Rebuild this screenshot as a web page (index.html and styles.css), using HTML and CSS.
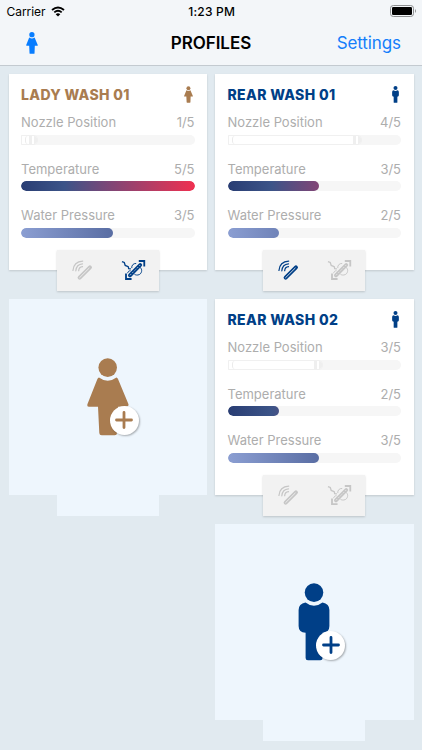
FILE: index.html
```html
<!DOCTYPE html>
<html lang="en">
<head>
<meta charset="UTF-8">
<meta name="viewport" content="width=device-width, initial-scale=1.0">
<title>Profiles</title>
<link rel="stylesheet" href="styles.css">
</head>
<body>
  <!-- ---------- SHARED ICONS ---------- -->
  <svg class="sprite" aria-hidden="true">
    <symbol id="lady" viewBox="0 0 42 78">
      <circle cx="20.7" cy="9.6" r="9.3"/>
      <path d="M12 19.4Q20.7 26 29.4 19.4Q30.4 19.8 31 21L41.4 46Q42 48.8 39.5 48.8H31L30 75Q30 77.3 27.7 77.3H14.7Q12.4 77.3 12.3 75L11 48.8H2.2Q-.4 48.6.5 46L10.4 21Q11 19.8 12 19.4Z"/>
    </symbol>
    <symbol id="man" viewBox="0 0 32 78">
      <circle cx="16" cy="9.6" r="9.3"/>
      <path d="M7.5 19.4Q16 26 24.5 19.4Q31.4 20.5 31.4 27V43Q31.4 49.5 24.6 49.8V75Q24.6 77.3 22.3 77.3H9.9Q7.6 77.3 7.6 75V49.8Q.6 49.5.6 43V27Q.6 20.5 7.5 19.4Z"/>
    </symbol>
    <symbol id="wand" viewBox="0 0 22 22">
      <g fill="none" stroke="currentColor" stroke-linecap="round">
        <path d="M8 18.5L18.8 7.7" stroke-width="4.2"/>
        <path d="M8 18.5L18 8.5" class="groove" stroke-width=".9"/>
        <path d="M1 11C1.5 5 5.5 1.5 11.2 1.2M4 11.3C4.4 7.2 7.2 4.4 11 4.1M7 11.2C7.2 8.8 8.8 7.2 11 7" stroke-width="1.3"/>
      </g>
    </symbol>
    <symbol id="spray" viewBox="0 0 26 22">
      <g fill="none" stroke="currentColor">
        <path d="M18.5 1.6H24.2V7.3M5.2 14.7V20.4H11" stroke-width="1.9"/>
        <path d="M9.3 16.5L20 5.8" stroke-width="4" stroke-linecap="round"/>
        <path d="M9.3 16.5L20 5.8" class="groove" stroke-width=".7" stroke-dasharray="2 1.4"/>
        <path d="M1 2.2L3.4 3.2L4.4 6.2L7.5 7.5L8 9.6L10.3 9.8" stroke-width="1.4"/>
        <path d="M11.2 9C10.8 6.3 12.8 4 15.8 4.2M19.9 8.3C22.6 10 21.9 15.6 17.6 16.2C15.6 16.4 14.2 15.9 13.8 15M6.9 14.3C7.2 12.6 8.4 11.6 10 11.8" stroke-width="1"/>
      </g>
    </symbol>
  </svg>

  <header class="top">
    <div class="status">
      <div class="carrier">
        <span>Carrier</span>
        <svg class="wifi" viewBox="0 0 14 11">
          <path d="M1 4Q7-1 13 4M3.3 6.4Q7 3.2 10.7 6.4" fill="none" stroke="#000" stroke-width="1.9"/>
          <path d="M7 10.6L4.7 8.2Q7 6.4 9.3 8.2Z"/>
        </svg>
      </div>
      <span class="time">1:23 PM</span>
      <div class="battery-wrap">
        <svg class="battery" viewBox="0 0 27 12">
          <rect x=".5" y=".5" width="23" height="11" rx="2.8" fill="none" stroke="#8e9092"/>
          <rect x="2" y="2" width="20" height="8" rx="1.3"/>
          <path d="M25 4Q27 6 25 8Z" fill="#8e9092"/>
        </svg>
      </div>
    </div>
    <nav class="nav">
      <div class="nav-left"><svg class="nav-icon"><use href="#lady"/></svg></div>
      <h1>PROFILES</h1>
      <a class="settings">Settings</a>
    </nav>
  </header>

  <main class="columns">
    <section class="column">
      <article class="profile lady">
        <div class="card">
          <div class="card-head"><h2>LADY WASH 01</h2><svg class="who"><use href="#lady"/></svg></div>
          <div class="stat">
            <div class="stat-label"><span>Nozzle Position</span><span>1/5</span></div>
            <div class="bar track"><div class="nozzle" style="width:10%"><i></i></div></div>
          </div>
          <div class="stat">
            <div class="stat-label"><span>Temperature</span><span>5/5</span></div>
            <div class="bar"><div class="fill temp" style="width:100%"></div></div>
          </div>
          <div class="stat">
            <div class="stat-label"><span>Water Pressure</span><span>3/5</span></div>
            <div class="bar"><div class="fill water" style="width:53%"></div></div>
          </div>
        </div>
        <div class="modes">
          <svg class="wand"><use href="#wand"/></svg>
          <svg class="spray on"><use href="#spray"/></svg>
        </div>
      </article>

      <article class="profile empty lady">
        <div class="card">
          <div class="figure">
            <svg class="person"><use href="#lady"/></svg>
            <span class="plus"><svg viewBox="0 0 18 18"><path d="M9 1.5V16.5M1.5 9H16.5"/></svg></span>
          </div>
        </div>
        <div class="modes"></div>
      </article>
    </section>

    <section class="column">
      <article class="profile rear">
        <div class="card">
          <div class="card-head"><h2>REAR WASH 01</h2><svg class="who"><use href="#man"/></svg></div>
          <div class="stat">
            <div class="stat-label"><span>Nozzle Position</span><span>4/5</span></div>
            <div class="bar track"><div class="nozzle" style="width:77.5%"><i></i></div></div>
          </div>
          <div class="stat">
            <div class="stat-label"><span>Temperature</span><span>3/5</span></div>
            <div class="bar"><div class="fill temp" style="width:53%"></div></div>
          </div>
          <div class="stat">
            <div class="stat-label"><span>Water Pressure</span><span>2/5</span></div>
            <div class="bar"><div class="fill water" style="width:29.5%"></div></div>
          </div>
        </div>
        <div class="modes">
          <svg class="wand on"><use href="#wand"/></svg>
          <svg class="spray"><use href="#spray"/></svg>
        </div>
      </article>

      <article class="profile rear">
        <div class="card">
          <div class="card-head"><h2>REAR WASH 02</h2><svg class="who"><use href="#man"/></svg></div>
          <div class="stat">
            <div class="stat-label"><span>Nozzle Position</span><span>3/5</span></div>
            <div class="bar track"><div class="nozzle" style="width:55%"><i></i></div></div>
          </div>
          <div class="stat">
            <div class="stat-label"><span>Temperature</span><span>2/5</span></div>
            <div class="bar"><div class="fill temp" style="width:29.5%"></div></div>
          </div>
          <div class="stat">
            <div class="stat-label"><span>Water Pressure</span><span>3/5</span></div>
            <div class="bar"><div class="fill water" style="width:53%"></div></div>
          </div>
        </div>
        <div class="modes">
          <svg class="wand"><use href="#wand"/></svg>
          <svg class="spray"><use href="#spray"/></svg>
        </div>
      </article>

      <article class="profile empty rear">
        <div class="card">
          <div class="figure">
            <svg class="person"><use href="#man"/></svg>
            <span class="plus"><svg viewBox="0 0 18 18"><path d="M9 1.5V16.5M1.5 9H16.5"/></svg></span>
          </div>
        </div>
        <div class="modes"></div>
      </article>
    </section>
  </main>
</body>
</html>
```

FILE: styles.css
```css
:root{
  --bg:#e1eaf0;
  --empty:#eef6fd;
  --lady:#a97c50;
  --rear:#003f87;
  --blue:#147efb;
  --muted:#adadad;
}
*{box-sizing:border-box;margin:0;padding:0;}
body{
  height:750px;overflow:hidden;background:var(--bg);color:#000;
  font-family:Inter,"Liberation Sans",sans-serif;
}
svg{display:block;fill:currentColor;}
.sprite{width:0;height:0;position:absolute;}

/* ---------- HEADER ---------- */
.top{height:66px;background:#f3f6f9;border-bottom:1px solid #c3cad0;}
.status{
  height:22px;display:grid;grid-template-columns:1fr auto 1fr;align-items:center;
  padding:0 5px 0 6.5px;font-size:12px;
}
.carrier{display:flex;align-items:center;gap:6px;letter-spacing:-.05px;}
.wifi{width:14px;height:11px;}
.time{font-weight:500;letter-spacing:.2px;}
.battery-wrap{display:flex;justify-content:flex-end;}
.battery{width:27px;height:12px;}
.nav{height:42px;display:grid;grid-template-columns:1fr auto 1fr;align-items:center;padding:0 21px 0 26px;}
.nav-icon{width:12px;height:22px;color:#087dff;}
h1{font-size:17px;font-weight:600;letter-spacing:-.05px;margin-left:-5px;}
.settings{font-size:17px;color:var(--blue);text-align:right;letter-spacing:-.1px;}

/* ---------- PROFILE CARDS ---------- */
.columns{display:flex;gap:8px;padding:8px 8.5px 0;}
.column{flex:1;display:flex;flex-direction:column;gap:8.5px;}
.profile{display:flex;flex-direction:column;align-items:center;}
.card{
  width:100%;height:196px;padding:10px 12.5px;background:#fff;
  box-shadow:0 1px 2px rgba(0,0,0,.15);
}
.lady{color:var(--lady);}
.rear{color:var(--rear);}
.card-head{height:21px;display:flex;justify-content:space-between;align-items:center;margin-bottom:7px;}
h2{font-size:14px;font-weight:800;letter-spacing:.35px;white-space:nowrap;}
.who{width:9px;height:17px;margin-right:1.5px;}
.stat{margin-bottom:14px;}
.stat-label{
  height:20px;margin-bottom:2.5px;display:flex;justify-content:space-between;align-items:center;
  font-size:13px;color:var(--muted);white-space:nowrap;
}
.bar{height:10px;border-radius:5px;background:#f6f6f6;overflow:hidden;}
.fill{height:100%;border-radius:5px;background-size:174px 10px;}
.temp{background-image:linear-gradient(90deg,#293d73,#3c5488 25%,#7c4677 50%,#b63c64 75%,#f03050);}
.water{background-image:linear-gradient(90deg,#8b9ed2,#596da3 53%,#354b80);}
.track{border-radius:0 5px 5px 0;}
.nozzle{
  height:100%;padding-left:3px;background:#fff;border:1px solid #f0f0f0;
  border-radius:0 4px 4px 0;display:flex;
}
.nozzle i{width:100%;border-left:1px solid #ebebeb;border-right:8px double #efefef;border-radius:3px;}

/* Mode tab hanging off the bottom edge */
.modes{
  position:relative;width:102px;height:40.5px;margin-top:-20px;padding:0 13px 0 15px;
  display:flex;justify-content:space-between;align-items:center;
  background:#f2f2f2;color:#c6c6c6;box-shadow:0 1px 2px rgba(0,0,0,.16);
}
.wand{width:21px;height:21px;}
.spray{width:25px;height:22px;}
.groove{stroke:#f2f2f2;}
.modes .on{color:var(--rear);}

/* ---------- EMPTY SLOTS ---------- */
.empty .card,.empty .modes{background:var(--empty);box-shadow:none;}
.empty .card{display:flex;justify-content:center;align-items:center;}
.figure{position:relative;height:78px;}
.person{height:78px;width:42px;}
.rear .person{width:32px;}
.plus{
  position:absolute;left:23px;top:47.5px;width:29px;height:29px;border-radius:50%;
  display:flex;justify-content:center;align-items:center;
  background:#fff;box-shadow:1px 1px 2px rgba(0,0,0,.3);
}
.rear .plus{left:18px;}
.plus svg{width:18px;height:18px;fill:none;stroke:currentColor;stroke-width:2.8;stroke-linecap:round;}
```
